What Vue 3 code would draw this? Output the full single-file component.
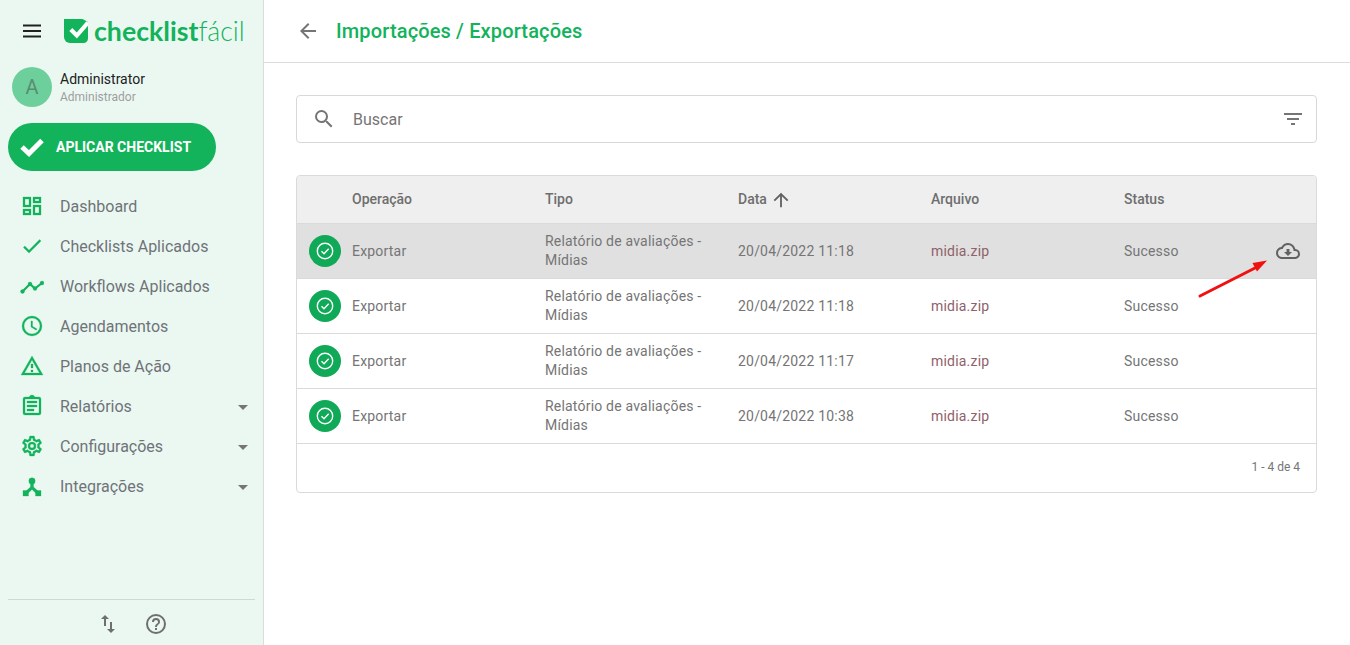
<template>
  <div class="app">
    <aside class="sidebar">
      <div class="brand">
        <svg class="menu" width="20" height="14" viewBox="0 0 20 14"><path d="M1 1.500h18M1 7h18M1 12.500h18" stroke="#212121" stroke-width="2" /></svg>
        <svg class="logo-mark" width="24" height="24" viewBox="0 0 24 24">
          <path d="M0 0h18.500L24 3v16.500a4.500 4.500 0 0 1-4.500 4.500H6a6 6 0 0 1-6-6z" fill="#12b35b" />
          <path d="M6.800 10.500l6 6L24 3.500" fill="none" stroke="#fff" stroke-width="4.200" />
        </svg>
        <span class="logo-text"><b>checklist</b>fácil</span>
      </div>

      <div class="user">
        <div class="avatar">A</div>
        <div>
          <div class="user-name">Administrator</div>
          <div class="user-role">Administrador</div>
        </div>
      </div>

      <button class="apply">
        <svg width="26" height="20" viewBox="0 0 26 20"><path d="M3 10l7 6.500L23 3.500" fill="none" stroke="#fff" stroke-width="5" /></svg>
        APLICAR CHECKLIST
      </button>

      <nav class="nav">
        <div v-for="item in menu" :key="item.label" class="nav-item">
          <svg class="nav-icon" width="24" height="24" viewBox="0 0 24 24" v-html="item.icon"></svg>
          <span>{{ item.label }}</span>
          <i v-if="item.caret" class="caret"></i>
        </div>
      </nav>

      <div class="side-foot">
        <svg width="24" height="24" viewBox="0 0 24 24"><path fill="#6f6f6f" d="M9 3 5 7h3v7h2V7h3zM16 17v-7h-2v7h-3l4 4 4-4z" /></svg>
        <svg width="24" height="24" viewBox="0 0 24 24"><path fill="#6f6f6f" d="M11 18h2v-2h-2zm1-16a10 10 0 1 0 0 20 10 10 0 0 0 0-20zm0 18a8 8 0 1 1 0-16 8 8 0 0 1 0 16zm0-14a4 4 0 0 0-4 4h2a2 2 0 1 1 4 0c0 2-3 1.750-3 5h2c0-2.250 3-2.500 3-5a4 4 0 0 0-4-4z" /></svg>
      </div>
    </aside>

    <main class="main">
      <header class="topbar">
        <svg width="24" height="24" viewBox="0 0 24 24"><path fill="#757575" d="M20 11H7.830l5.590-5.590L12 4l-8 8 8 8 1.410-1.410L7.830 13H20z" /></svg>
        <h1>Importações / Exportações</h1>
      </header>

      <div class="content">
        <div class="search">
          <svg width="24" height="24" viewBox="0 0 24 24"><path fill="#757575" d="M15.500 14h-.790l-.280-.270A6.470 6.470 0 0 0 16 9.500 6.500 6.500 0 1 0 9.500 16c1.610 0 3.090-.590 4.230-1.570l.270.280v.790l5 4.990L20.490 19zm-6 0a4.500 4.500 0 1 1 0-9 4.500 4.500 0 0 1 0 9z" /></svg>
          <span class="search-text">Buscar</span>
          <svg width="24" height="24" viewBox="0 0 24 24"><path fill="#757575" d="M10 18h4v-2h-4zM3 6v2h18V6zm3 7h12v-2H6z" /></svg>
        </div>

        <section class="table">
          <div class="row head">
            <div></div>
            <div v-for="c in columns" :key="c" class="cell">
              {{ c }}
              <svg v-if="c === 'Data'" class="sort" width="22" height="22" viewBox="0 0 24 24"><path fill="#616161" d="M4 12l1.410 1.410L11 7.830V20h2V7.830l5.580 5.590L20 12l-8-8z" /></svg>
            </div>
            <div></div>
          </div>

          <div v-for="(r, i) in rows" :key="i" class="row body" :class="{ hover: i === 0 }">
            <div class="status-cell">
              <span class="status-dot">
                <svg width="20" height="20" viewBox="0 0 20 20"><circle cx="10" cy="10" r="7.700" fill="none" stroke="#fff" stroke-width="1.400" /><path d="M6.500 10.200l2.500 2.500 4.700-5" fill="none" stroke="#fff" stroke-width="1.400" /></svg>
              </span>
            </div>
            <div class="cell">Exportar</div>
            <div class="cell type">Relatório de avaliações - Mídias</div>
            <div class="cell">{{ r }}</div>
            <div class="cell file">midia.zip</div>
            <div class="cell">Sucesso</div>
            <div class="action">
              <svg v-if="i === 0" width="24" height="24" viewBox="0 0 24 24"><path fill="#616161" d="M19.350 10.040A7.490 7.490 0 0 0 12 4C9.110 4 6.600 5.640 5.350 8.040A5.994 5.994 0 0 0 0 14c0 3.310 2.690 6 6 6h13c2.760 0 5-2.240 5-5 0-2.640-2.050-4.780-4.650-4.960zM19 18H6c-2.210 0-4-1.790-4-4 0-2.050 1.530-3.760 3.560-3.970l1.070-.110.500-.950A5.469 5.469 0 0 1 12 6c2.620 0 4.880 1.860 5.390 4.430l.300 1.500 1.530.110A2.980 2.980 0 0 1 22 15c0 1.650-1.350 3-3 3zm-5.550-8h-2.900v3H8l4 4 4-4h-2.550z" /></svg>
            </div>
          </div>

          <div class="table-foot">1 - 4 de 4</div>
        </section>
      </div>
    </main>

    <svg class="annotation" width="80" height="50" viewBox="0 0 80 50">
      <path d="M3 46 60 17" stroke="#f01010" stroke-width="3" stroke-linecap="round" />
      <path d="M70 10.500 55.500 13 60 21.500z" fill="#f01010" />
    </svg>
  </div>
</template>

<script setup>
const menu = [
  { label: 'Dashboard', icon: '<path d="M3 3h8v10H3zM5 5v6h4V5zM13 3h8v6h-8zM15 5v2h4V5zM13 11h8v10h-8zM15 13v6h4v-6zM3 15h8v6H3zM5 17v2h4v-2z" fill-rule="evenodd"/>' },
  { label: 'Checklists Aplicados', icon: '<path d="M9 16.170 4.830 12l-1.420 1.410L9 19 21 7l-1.410-1.410z"/>' },
  { label: 'Workflows Aplicados', icon: '<path d="M2.500 17.500 10 10l5 4.500L22 9" fill="none" stroke="#12b35b" stroke-width="2.200"/><circle cx="2.500" cy="17.500" r="2"/><circle cx="10" cy="10" r="2"/><circle cx="15" cy="14.500" r="2"/><circle cx="22" cy="9" r="2"/>' },
  { label: 'Agendamentos', icon: '<path d="M12 2a10 10 0 1 0 0 20 10 10 0 0 0 0-20zm0 18a8 8 0 1 1 0-16 8 8 0 0 1 0 16z"/><path d="M12.500 7H11v6l5.250 3.150.750-1.230-4.500-2.670z"/>' },
  { label: 'Planos de Ação', icon: '<path d="M12 2 1 21h22zm0 4 7.530 13H4.470zM11 10v4h2v-4zm0 6v2h2v-2z" fill-rule="evenodd"/>' },
  { label: 'Relatórios', caret: true, icon: '<path d="M19 3h-4.180C14.400 1.840 13.300 1 12 1s-2.400.840-2.820 2H5a2 2 0 0 0-2 2v14a2 2 0 0 0 2 2h14a2 2 0 0 0 2-2V5a2 2 0 0 0-2-2zm0 16H5V5h14zM7 7h10v2H7zm0 4h10v2H7zm0 4h7v2H7z"/>' },
  { label: 'Configurações', caret: true, icon: '<path d="M19.430 12.980c.040-.320.070-.640.070-.980s-.030-.660-.070-.980l2.110-1.650a.5.500 0 0 0 .120-.640l-2-3.460a.5.500 0 0 0-.610-.220l-2.490 1a7.300 7.300 0 0 0-1.690-.980l-.380-2.650A.49.490 0 0 0 14 2h-4a.49.490 0 0 0-.490.420l-.380 2.650c-.610.250-1.170.590-1.690.980l-2.490-1a.5.500 0 0 0-.610.220l-2 3.460a.49.490 0 0 0 .120.640l2.110 1.650c-.040.320-.070.650-.070.980s.030.660.070.980l-2.110 1.650a.5.500 0 0 0-.120.640l2 3.460c.120.220.390.300.610.220l2.490-1c.520.400 1.080.730 1.690.980l.380 2.650c.030.240.240.420.490.420h4c.250 0 .460-.180.490-.420l.380-2.650c.610-.250 1.170-.590 1.690-.980l2.490 1c.230.090.490 0 .610-.220l2-3.460a.5.500 0 0 0-.120-.640zM17.450 11.270c.040.310.050.520.050.730s-.020.430-.050.730l-.140 1.130.890.700 1.080.840-.700 1.210-1.270-.510-1.040-.420-.900.680c-.430.320-.840.560-1.250.730l-1.060.430-.160 1.130-.200 1.350h-1.400l-.190-1.350-.160-1.130-1.060-.430c-.430-.180-.830-.410-1.230-.710l-.910-.700-1.060.430-1.270.510-.700-1.210 1.080-.840.890-.700-.140-1.130A9 9 0 0 1 6.500 12c0-.200.020-.430.050-.730l.140-1.130-.890-.700-1.080-.840.700-1.210 1.270.510 1.040.420.900-.680c.430-.320.840-.560 1.250-.730l1.060-.430.160-1.130.200-1.350h1.390l.190 1.350.160 1.130 1.060.430c.430.180.830.410 1.230.710l.910.700 1.060-.430 1.270-.510.700 1.210-1.070.850-.890.700zM12 8a4 4 0 1 0 0 8 4 4 0 0 0 0-8zm0 6a2 2 0 1 1 0-4 2 2 0 0 1 0 4z"/>' },
  { label: 'Integrações', caret: true, icon: '<circle cx="12" cy="7" r="3.200"/><path d="M10.500 9h3v4l5 4.500-2 2.200L12 15.500l-4.500 4.200-2-2.200 5-4.500z"/><path d="M3 16.500h5.500V22H3zM15.500 16.500H21V22h-5.500z"/>' }
]

const columns = ['Operação', 'Tipo', 'Data', 'Arquivo', 'Status']

const rows = ['20/04/2022 11:18', '20/04/2022 11:18', '20/04/2022 11:17', '20/04/2022 10:38']
</script>

<style>
html, body { margin: 0; background: #fff; }
</style>

<style scoped>
.app {
  position: relative;
  display: flex;
  width: 1350px;
  height: 645px;
  overflow: hidden;
  font-family: Roboto, "Liberation Sans", sans-serif;
  color: #757575;
}

.sidebar {
  box-sizing: border-box;
  display: flex;
  flex-direction: column;
  flex: 0 0 264px;
  height: 645px;
  background: #ebf8f2;
  border-right: 1px solid #dcdcdc;
}

.brand {
  display: flex;
  align-items: center;
  height: 62px;
  padding-left: 22px;
}
.logo-mark { margin-left: 22px; }
.logo-text {
  margin-left: 6px;
  font-family: Lato, Roboto, sans-serif;
  font-size: 26.700px;
  font-weight: 300;
  color: #12b35b;
}
.logo-text b { font-weight: 700; }

.user {
  display: flex;
  align-items: center;
  gap: 8px;
  height: 40px;
  margin-top: 5px;
  padding-left: 12px;
}
.avatar {
  display: flex;
  align-items: center;
  justify-content: center;
  width: 40px;
  height: 40px;
  border-radius: 50%;
  background: #6dd09c;
  font-size: 20px;
  color: #5a8c72;
}
.user-name { font-size: 14px; line-height: 20px; color: #212121; }
.user-role { font-size: 12px; line-height: 16px; color: #9e9e9e; }

.apply {
  display: flex;
  align-items: center;
  gap: 11px;
  box-sizing: border-box;
  width: 208px;
  height: 48px;
  margin: 16px 0 0 8px;
  padding: 0 0 0 11px;
  border: 0;
  border-radius: 24px;
  background: #12b35b;
  color: #fff;
  font-family: inherit;
  font-size: 14px;
  font-weight: 700;
}

.nav { margin-top: 15px; flex: 1; }
.nav-item {
  position: relative;
  display: flex;
  align-items: center;
  height: 40px;
  padding-left: 20px;
  font-size: 16px;
  color: #6f7378;
}
.nav-icon {
  fill: #12b35b;
  stroke: #12b35b;
  stroke-width: 0.3;
  margin-right: 16px;
}
.caret {
  position: absolute;
  right: 15px;
  top: 19px;
  border-left: 5px solid transparent;
  border-right: 5px solid transparent;
  border-top: 5px solid #757575;
}

.side-foot {
  display: flex;
  justify-content: center;
  align-items: center;
  gap: 24px;
  box-sizing: border-box;
  height: 46px;
  margin: 0 8px;
  padding-top: 3px;
  border-top: 1px solid #cfd8d3;
}

.main { flex: 1; min-width: 0; }
.topbar {
  display: flex;
  align-items: center;
  box-sizing: border-box;
  height: 63px;
  padding-left: 32px;
  border-bottom: 1px solid #dcdcdc;
}
.topbar h1 {
  margin: 0 0 0 16px;
  font-size: 20px;
  font-weight: 500;
  letter-spacing: 0.14px;
  color: #12b35b;
}

.content { padding: 32px 33px 0 32px; }

.search {
  display: flex;
  align-items: center;
  box-sizing: border-box;
  height: 48px;
  padding: 0 11px 0 15px;
  border: 1px solid #d8d8d8;
  border-radius: 4px;
}
.search-text { flex: 1; margin-left: 17px; font-size: 16px; color: #757575; }

.table {
  margin-top: 32px;
  border: 1px solid #dadada;
  border-radius: 4px;
  overflow: hidden;
}
.row {
  display: grid;
  grid-template-columns: 55px repeat(4, 193px) 100px 1fr;
  align-items: center;
  box-sizing: border-box;
  border-bottom: 1px solid #dadada;
  font-size: 14px;
}
.head { height: 48px; background: #efefef; font-weight: 500; color: #6e6e6e; }
.body { height: 55px; letter-spacing: 0.2px; }
.hover { background: #e0e0e0; }
.cell { padding-right: 24px; line-height: 19px; }
.head .cell { display: flex; align-items: center; gap: 3px; }
.file { color: #8f6169; }
.status-cell { padding-left: 12px; display: flex; }
.status-dot {
  display: flex;
  align-items: center;
  justify-content: center;
  width: 32px;
  height: 32px;
  border-radius: 50%;
  background: #0fa958;
}
.action { display: flex; justify-content: flex-end; padding-right: 16px; }

.table-foot {
  height: 48px;
  line-height: 46px;
  padding-right: 16px;
  text-align: right;
  font-size: 12px;
  color: #757575;
}

.annotation {
  position: absolute;
  left: 1197px;
  top: 250px;
}
</style>
